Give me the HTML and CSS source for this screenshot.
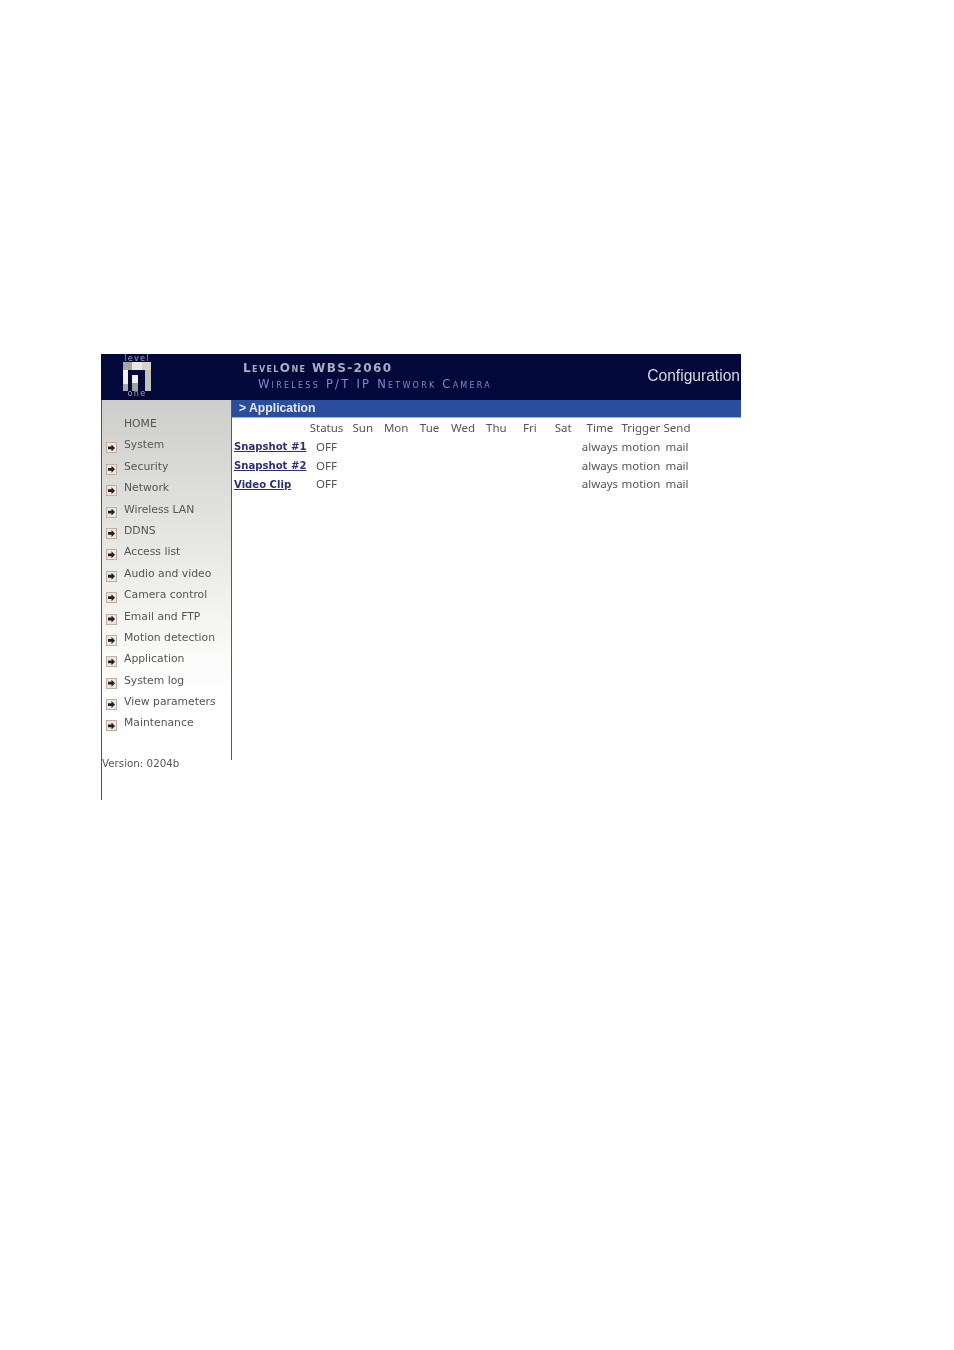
FILE: index.html
```html
<!DOCTYPE html>
<html lang="en">
<head>
    <meta charset="UTF-8">
    <title>Application</title>
    <link rel="stylesheet" href="styles.css">
</head>
<body>
    <div class="frame">
        <div class="header">
            <div class="logo">
                <div class="logo-text">level</div>
                <svg class="logo-mark" width="28" height="29" viewBox="0 0 28 29">
                    <rect width="28" height="29" fill="#d4d4cc"/>
                    <rect x="0" y="0" width="9" height="8" fill="#a4a6a0"/>
                    <rect x="9" y="0" width="10" height="8" fill="#e8e8e0"/>
                    <rect x="0" y="8" width="5" height="21" fill="#f0f0ea"/>
                    <rect x="0" y="22" width="5" height="7" fill="#a8aaa4"/>
                    <rect x="9" y="13" width="6" height="8" fill="#f2f2ec"/>
                    <rect x="9" y="21" width="6" height="8" fill="#a0a29c"/>
                    <path d="M5 8h17v21h-7V13H9v16H5z" fill="#02083a"/>
                    <rect x="22" y="8" width="6" height="21" fill="#c0c2bc"/>
                </svg>
                <div class="logo-text">one</div>
            </div>
            <div class="product">
                <div class="product-name">LevelOne WBS-2060</div>
                <div class="product-desc">Wireless P/T IP Network Camera</div>
            </div>
            <div class="header-title">Configuration</div>
        </div>
        <div class="body">
            <div class="sidebar">
                <ul class="menu">
                    <li class="home">HOME</li>
                    <li><span class="bullet"></span>System</li>
                    <li><span class="bullet"></span>Security</li>
                    <li><span class="bullet"></span>Network</li>
                    <li><span class="bullet"></span>Wireless LAN</li>
                    <li><span class="bullet"></span>DDNS</li>
                    <li><span class="bullet"></span>Access list</li>
                    <li><span class="bullet"></span>Audio and video</li>
                    <li><span class="bullet"></span>Camera control</li>
                    <li><span class="bullet"></span>Email and FTP</li>
                    <li><span class="bullet"></span>Motion detection</li>
                    <li><span class="bullet"></span>Application</li>
                    <li><span class="bullet"></span>System log</li>
                    <li><span class="bullet"></span>View parameters</li>
                    <li><span class="bullet"></span>Maintenance</li>
                </ul>
                <div class="version">Version: 0204b</div>
            </div>
            <div class="content">
                <div class="title-bar">&gt; Application</div>
                <table class="schedule">
                    <tr>
                        <th class="col-name"></th>
                        <th class="col-status">Status</th>
                        <th class="col-day">Sun</th>
                        <th class="col-day">Mon</th>
                        <th class="col-day">Tue</th>
                        <th class="col-day">Wed</th>
                        <th class="col-day">Thu</th>
                        <th class="col-day">Fri</th>
                        <th class="col-day">Sat</th>
                        <th class="col-time">Time</th>
                        <th class="col-trigger">Trigger</th>
                        <th class="col-send">Send</th>
                    </tr>
                    <tr>
                        <td class="name"><a href="#">Snapshot #1</a></td>
                        <td>OFF</td>
                        <td></td><td></td><td></td><td></td><td></td><td></td><td></td>
                        <td>always</td>
                        <td>motion</td>
                        <td>mail</td>
                    </tr>
                    <tr>
                        <td class="name"><a href="#">Snapshot #2</a></td>
                        <td>OFF</td>
                        <td></td><td></td><td></td><td></td><td></td><td></td><td></td>
                        <td>always</td>
                        <td>motion</td>
                        <td>mail</td>
                    </tr>
                    <tr>
                        <td class="name"><a href="#">Video Clip</a></td>
                        <td>OFF</td>
                        <td></td><td></td><td></td><td></td><td></td><td></td><td></td>
                        <td>always</td>
                        <td>motion</td>
                        <td>mail</td>
                    </tr>
                </table>
            </div>
        </div>
    </div>
</body>
</html>
```

FILE: styles.css
```css
html, body {
    margin: 0;
    background: white;
}

body {
    height: 1350px;
    padding: 354px 0 0 101px;
    box-sizing: border-box;
    font-family: "DejaVu Sans", sans-serif;
    color: #555;
    overflow: hidden;
}

.frame {
    width: 640px;
    filter: blur(0.4px);
}

.header {
    height: 46px;
    background: #02083a;
    display: flex;
}

.logo {
    width: 142px;
    padding: 2px 0 0 22px;
    box-sizing: border-box;
    display: flex;
    flex-direction: column;
}

.logo-text {
    width: 28px;
    height: 6px;
    font-size: 8px;
    line-height: 6px;
    letter-spacing: 1.3px;
    text-align: center;
    color: #a4a6aa;
}

.logo-mark {
    display: block;
}

.product {
    padding-top: 7px;
}

.product-name {
    font-size: 12px;
    line-height: 14px;
    font-weight: bold;
    font-variant: small-caps;
    letter-spacing: 1.4px;
    color: #a9adc0;
    white-space: nowrap;
}

.product-desc {
    margin: 3px 0 0 15px;
    font-size: 11.5px;
    line-height: 13px;
    font-variant: small-caps;
    letter-spacing: 2.25px;
    color: #7d8bd0;
    white-space: nowrap;
}

.header-title {
    margin-left: auto;
    padding: 13px 1px 0 0;
    font-family: "Liberation Sans", sans-serif;
    font-size: 15.6px;
    line-height: 18px;
    color: #d6d8de;
}

.body {
    display: flex;
}

.sidebar {
    width: 131px;
    height: 400px;
    box-sizing: border-box;
    border-left: 1px solid #555;
    background: linear-gradient(#cdcdcb 0, #e8e8e6 150px, #fbfbfa 260px, #fff 300px);
    background-size: 100% 360px;
    background-repeat: no-repeat;
    position: relative;
}

.sidebar::after {
    content: "";
    position: absolute;
    top: 0;
    right: 0;
    width: 1px;
    height: 360px;
    background: #4a5a80;
}

.menu {
    list-style: none;
    margin: 0;
    padding: 13px 0 0 0;
    font-size: 10.8px;
}

.menu li {
    height: 21.4px;
    line-height: 21.4px;
    padding-left: 22px;
    position: relative;
    white-space: nowrap;
}

.bullet {
    position: absolute;
    left: 4px;
    top: 8px;
    width: 9px;
    height: 9px;
    border: 1px solid #c4aca0;
    background: #ebe7e0;
}

.bullet::after {
    content: "";
    position: absolute;
    left: 1px;
    top: 1px;
    width: 7px;
    height: 7px;
    background: #222;
    clip-path: polygon(0 30%, 50% 30%, 50% 0, 100% 50%, 50% 100%, 50% 70%, 0 70%);
}

.version {
    margin-top: 22px;
    font-size: 10.3px;
    line-height: 14px;
}

.content {
    flex: 1;
}

.title-bar {
    height: 18px;
    padding-left: 7px;
    background: #2a4d9c;
    border-bottom: 1px solid #9fb0d0;
    box-sizing: border-box;
    font-family: "Liberation Sans", sans-serif;
    font-size: 12.2px;
    font-weight: bold;
    line-height: 16px;
    color: #e6e9f4;
}

.schedule {
    margin: 0;
    border-collapse: collapse;
    table-layout: fixed;
    width: 460px;
    font-family: "Noto Sans", sans-serif;
    font-size: 11.5px;
}

.schedule th, .schedule td {
    height: 18.7px;
    padding: 0;
    font-weight: normal;
    text-align: center;
    white-space: nowrap;
}

.schedule th {
    height: 19px;
}

.col-name { width: 75px; }
.col-status { width: 39px; }
.col-day { width: 33.4px; }
.col-time { width: 40px; }
.col-trigger { width: 42px; }
.col-send { width: 30px; }

.schedule td.name {
    text-align: left;
    padding: 1px 0 0 2px;
    box-sizing: border-box;
    font-family: "DejaVu Sans", sans-serif;
    font-size: 10.1px;
    font-weight: bold;
}

.name a {
    color: #2b2f7c;
}
```
